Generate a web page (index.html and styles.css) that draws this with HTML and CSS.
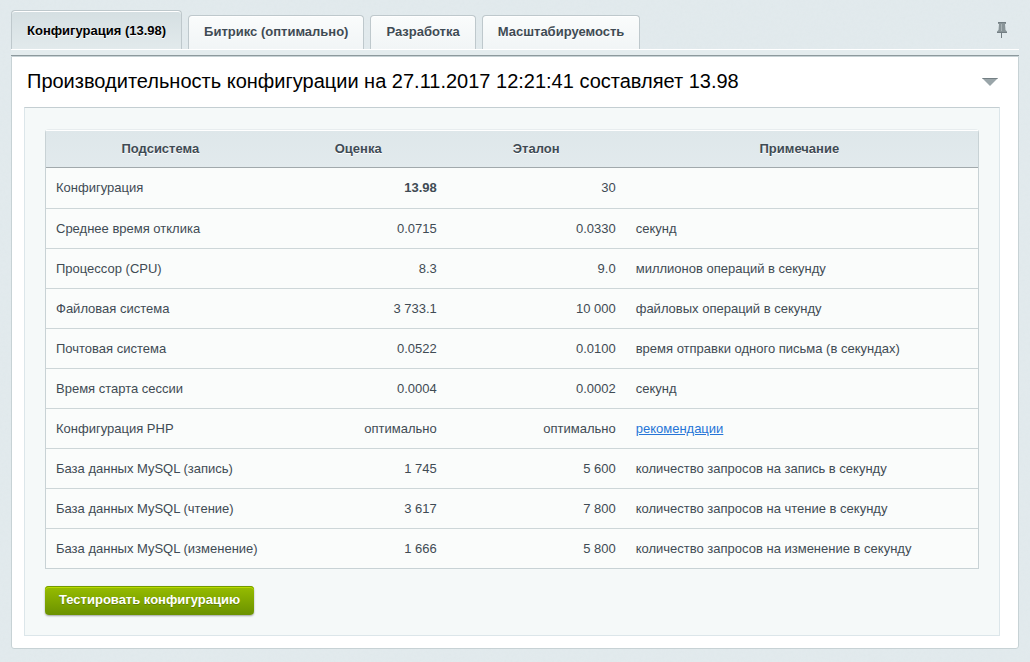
FILE: index.html
```html
<!DOCTYPE html>
<html lang="ru">
<head>
<meta charset="utf-8">
<title>Производительность</title>
<link rel="stylesheet" href="styles.css">
</head>
<body>
<svg class="texture" aria-hidden="true">
  <filter id="grain"><feTurbulence type="fractalNoise" baseFrequency="0.35" numOctaves="2"/><feColorMatrix values="0 0 0 0 0.7  0 0 0 0 0.78  0 0 0 0 0.8  0.9 0 0 0 -0.3"/></filter>
  <rect width="100%" height="100%" filter="url(#grain)"/>
</svg>
<main class="page">
  <nav class="tabs">
    <button class="tab tab-active" type="button">Конфигурация (13.98)</button>
    <button class="tab" type="button">Битрикс (оптимально)</button>
    <button class="tab" type="button">Разработка</button>
    <button class="tab" type="button">Масштабируемость</button>
    <button class="pin" type="button" aria-label="Закрепить">
      <svg width="10" height="17" viewBox="0 0 10 17"><path d="M1 0h8v2H8l.5 6L10 9.500V11H0V9.500L1.500 8 2 2H1z" fill="#899498"/><path d="M4 2h1v7H4z" fill="#a8b2b5"/><path d="M1 0h8v1H1zM0 10h10v1H0z" fill="#737e83"/><path d="M4 11h1v5h-1z" fill="#737e83"/></svg>
    </button>
  </nav>
  <div class="strip"></div>
  <section class="panel">
    <header class="title-row">
      <h1 class="title">Производительность конфигурации на 27.11.2017 12:21:41 составляет 13.98</h1>
      <button class="toggle" type="button" aria-label="Свернуть">
        <svg width="16" height="8" viewBox="0 0 16 8"><path d="M0 0h16L8 8z" fill="#9aa5a9"/><path d="M0 0h16l-1 1H1z" fill="#747f84"/></svg>
      </button>
    </header>
    <div class="content">
      <table class="results">
        <colgroup><col class="col-name"><col class="col-score"><col class="col-ref"><col></colgroup>
        <thead><tr><th>Подсистема</th><th>Оценка</th><th>Эталон</th><th>Примечание</th></tr></thead>
        <tbody>
          <tr><td>Конфигурация</td><td class="num"><b>13.98</b></td><td class="num">30</td><td></td></tr>
          <tr><td>Среднее время отклика</td><td class="num">0.0715</td><td class="num">0.0330</td><td>секунд</td></tr>
          <tr><td>Процессор (CPU)</td><td class="num">8.3</td><td class="num">9.0</td><td>миллионов операций в секунду</td></tr>
          <tr><td>Файловая система</td><td class="num">3 733.1</td><td class="num">10 000</td><td>файловых операций в секунду</td></tr>
          <tr><td>Почтовая система</td><td class="num">0.0522</td><td class="num">0.0100</td><td>время отправки одного письма (в секундах)</td></tr>
          <tr><td>Время старта сессии</td><td class="num">0.0004</td><td class="num">0.0002</td><td>секунд</td></tr>
          <tr><td>Конфигурация PHP</td><td class="num">оптимально</td><td class="num">оптимально</td><td><a class="link" href="#">рекомендации</a></td></tr>
          <tr><td>База данных MySQL (запись)</td><td class="num">1 745</td><td class="num">5 600</td><td>количество запросов на запись в секунду</td></tr>
          <tr><td>База данных MySQL (чтение)</td><td class="num">3 617</td><td class="num">7 800</td><td>количество запросов на чтение в секунду</td></tr>
          <tr><td>База данных MySQL (изменение)</td><td class="num">1 666</td><td class="num">5 800</td><td>количество запросов на изменение в секунду</td></tr>
        </tbody>
      </table>
      <button class="run" type="button">Тестировать конфигурацию</button>
    </div>
  </section>
</main>
</body>
</html>
```
FILE: styles.css
```css
* { box-sizing: border-box; }

body {
  margin: 0;
  background: #e2eaed;
  color: #3f4b54;
  font: 13px/16px "Liberation Sans", Arial, sans-serif;
}

button {
  margin: 0;
  padding: 0;
  border: 0;
  background: none;
  color: inherit;
  font: inherit;
}

.texture {
  position: absolute;
  inset: 0;
  width: 100%;
  height: 100%;
  opacity: 0.5;
}

.page {
  position: relative;
  padding: 10px 11px 13px;
}

.tabs {
  display: flex;
  align-items: flex-end;
  gap: 6px;
}

.tab {
  height: 34px;
  padding: 0 15px 2px;
  border: 1px solid #bec8cc;
  border-bottom: 0;
  border-radius: 4px 4px 0 0;
  background: linear-gradient(#fafcfc, #f1f5f6);
  box-shadow: inset 0 1px #fff;
  font-weight: bold;
  text-shadow: 0 1px #fff;
}

.tab-active {
  height: 39px;
  padding-top: 2px;
  padding-bottom: 0;
  background: linear-gradient(#d5dfe2, #e2eaec);
  color: #000;
}

.pin {
  display: flex;
  align-self: center;
  margin: 0 12px 0 auto;
  padding-top: 2px;
}

.strip {
  height: 7px;
  border-top: 1px solid #fff;
  border-bottom: 1px solid #8d999d;
  background: #e4ecee;
}

.panel {
  padding: 0 18px 12px 12px;
  border: 1px solid #c7d2d5;
  border-radius: 0 0 3px 3px;
  background: #fff;
}

.title-row {
  display: flex;
  align-items: center;
  justify-content: space-between;
  height: 50px;
  padding: 0 2px 0 3px;
}

.title {
  margin: 0;
  padding-bottom: 2px;
  color: #000;
  font-size: 20px;
  font-weight: normal;
  line-height: 24px;
}

.toggle { display: flex; }

.content {
  padding: 21px 20px 20px;
  border: 1px solid #dce6ea;
  border-top-color: #c4ced2;
  background: #f5f9f9;
}

.results {
  width: 100%;
  border: 1px solid #c8d2d5;
  border-top-color: #e8edef;
  border-radius: 4px 4px 0 0;
  border-spacing: 0;
  table-layout: fixed;
  background: #fafcfb;
}

.col-name { width: 24%; }
.col-score { width: 19%; }
.col-ref { width: 19.2%; }

.results th {
  height: 38px;
  padding: 0;
  border-bottom: 1px solid #a1a9ac;
  background: linear-gradient(#dee7ea, #e2eaed);
  box-shadow: inset 0 1px #fff;
  text-shadow: 0 1px #fff;
}

.results th:first-child { padding-left: 5px; }
.results th:last-child { padding-right: 5px; }

.results td {
  height: 40px;
  padding: 0 10px;
  border-bottom: 1px solid #cdd6d8;
}

.results tbody tr:first-child td { height: 41px; }

.results tbody tr:last-child td {
  height: 39px;
  border-bottom: 0;
}

.results .num { text-align: right; }

.link { color: #2675d7; }

.run {
  display: block;
  height: 29px;
  margin-top: 17px;
  padding: 0 14px 2px;
  border-radius: 4px;
  background: linear-gradient(#97bd00, #6b9200);
  box-shadow: inset 0 1px #729900, inset 0 2px #b8db00, 0 1px 2px rgba(0, 0, 0, 0.35);
  color: #fff;
  font-weight: bold;
  text-shadow: 0 1px #628000;
}
```
